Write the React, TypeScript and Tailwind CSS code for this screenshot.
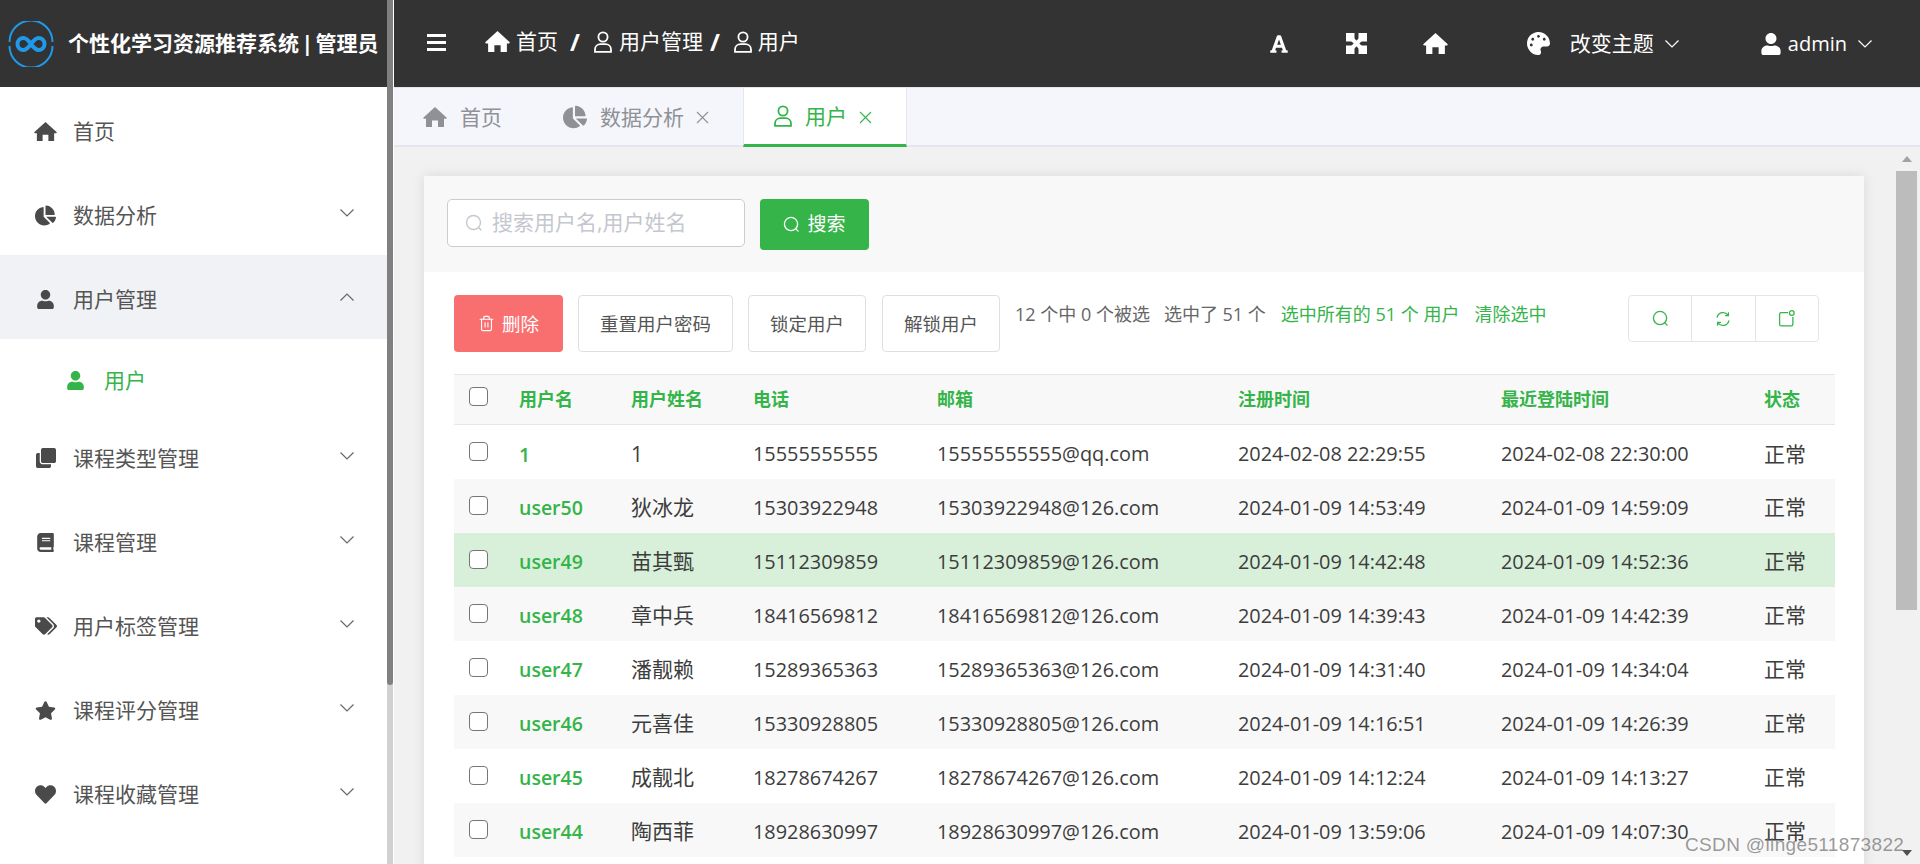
import React from "react";
import { FaChartPie, FaUser, FaClone, FaBook, FaTags, FaStar, FaHeart, FaFont, FaPalette } from "react-icons/fa";
import { Trash2 } from "lucide-react";

const Home = ({ size = 24, className = "" }: { size?: number; className?: string }) => (
  <svg width={size} height={size} viewBox="0 0 24 24" fill="currentColor" className={className}>
    <path d="M12 2 23.500 12.400a.8.8 0 0 1-.6 1.400H21V22h-6v-6.500H9V22H3v-8.200H1.100a.8.8 0 0 1-.6-1.400z" />
  </svg>
);

const Chevron = ({ up = false, className = "" }: { up?: boolean; className?: string }) => (
  <svg width="16" height="10" viewBox="0 0 16 10" fill="none" stroke="currentColor" strokeWidth="1.2" className={className}>
    {up ? <path d="M1.5 8.5 8 2l6.5 6.5" /> : <path d="M1.5 1.5 8 8l6.5-6.5" />}
  </svg>
);

const Search = ({ size = 18 }: { size?: number }) => (
  <svg width={size} height={size} viewBox="0 0 18 18" fill="none" stroke="currentColor" strokeWidth="1.4" strokeLinecap="round">
    <circle cx="8.5" cy="8.5" r="7" />
    <path d="M13.6 13.6 16 16" />
  </svg>
);

const Refresh = () => (
  <svg width="16" height="16" viewBox="0 0 16 16" fill="none" stroke="currentColor" strokeWidth="1.3" strokeLinecap="round">
    <path d="M2.2 6.2A6 6 0 0 1 13 4.2" />
    <path d="M13.8 9.8A6 6 0 0 1 3 11.8" />
    <path d="M13.4 1.8v2.8h-2.8" />
    <path d="M2.6 14.2v-2.8h2.8" />
  </svg>
);

const Note = () => (
  <svg width="17" height="17" viewBox="0 0 16 16" fill="none" stroke="currentColor" strokeWidth="1.2">
    <path d="M9.5 2.5H3a1.5 1.5 0 0 0-1.5 1.5v9.5A1.5 1.5 0 0 0 3 15h9.5a1.5 1.5 0 0 0 1.5-1.5V6.5" />
    <circle cx="13" cy="2.8" r="2.2" />
  </svg>
);

const UserOutline = ({ className = "" }: { className?: string }) => (
  <svg width="20" height="22" viewBox="0 0 20 22" fill="none" stroke="currentColor" strokeWidth="1.8" className={className}>
    <circle cx="10" cy="6" r="4.6" />
    <path d="M2 20.8v-2.3c0-3.2 2.6-5.3 5.5-5.3h5c2.9 0 5.5 2.1 5.5 5.3v2.3z" />
  </svg>
);

const Close = () => (
  <svg width="15" height="15" viewBox="0 0 15 15" fill="none" stroke="currentColor" strokeWidth="1.1">
    <path d="M2 2l11 11M13 2 2 13" />
  </svg>
);

const ArrowsSquare = () => (
  <svg width="21" height="21" viewBox="0 0 21 21" fill="#fff">
    <rect x="0" y="0" width="8.500" height="8.500" />
    <rect x="12.500" y="0" width="8.500" height="8.500" />
    <rect x="0" y="12.500" width="8.500" height="8.500" />
    <rect x="12.500" y="12.500" width="8.500" height="8.500" />
    <path d="M5 5 16 16M16 5 5 16" stroke="#fff" strokeWidth="4" />
  </svg>
);

const Logo = () => (
  <svg width="46" height="46" viewBox="0 0 46 46" fill="none" stroke="#1f9aea" className="shrink-0">
    <path d="M1.500 21A21.500 21.500 0 0 1 44.500 21" strokeWidth="2" />
    <path d="M44.500 25A21.500 21.500 0 0 1 1.500 25" strokeWidth="2" />
    <path d="M23 23c-2.500-3.500-4.500-6-7.500-6a6 6 0 0 0 0 12c3 0 5-2.500 7.500-6s4.500-6 7.500-6a6 6 0 0 1 0 12c-3 0-5-2.500-7.500-6z" strokeWidth="4" />
  </svg>
);

const menu = [
  { icon: <Home size={23} />, label: "首页", arrow: false },
  { icon: <FaChartPie size={21} />, label: "数据分析", arrow: true },
  { icon: <FaUser size={19} />, label: "用户管理", arrow: true, open: true },
  { icon: <FaClone size={20} />, label: "课程类型管理", arrow: true },
  { icon: <FaBook size={19} />, label: "课程管理", arrow: true },
  { icon: <FaTags size={22} />, label: "用户标签管理", arrow: true },
  { icon: <FaStar size={21} />, label: "课程评分管理", arrow: true },
  { icon: <FaHeart size={21} />, label: "课程收藏管理", arrow: true },
];

const rows = [
  ["1", "1", "15555555555", "15555555555@qq.com", "2024-02-08 22:29:55", "2024-02-08 22:30:00"],
  ["user50", "狄冰龙", "15303922948", "15303922948@126.com", "2024-01-09 14:53:49", "2024-01-09 14:59:09"],
  ["user49", "苗其甄", "15112309859", "15112309859@126.com", "2024-01-09 14:42:48", "2024-01-09 14:52:36"],
  ["user48", "章中兵", "18416569812", "18416569812@126.com", "2024-01-09 14:39:43", "2024-01-09 14:42:39"],
  ["user47", "潘靓赖", "15289365363", "15289365363@126.com", "2024-01-09 14:31:40", "2024-01-09 14:34:04"],
  ["user46", "元喜佳", "15330928805", "15330928805@126.com", "2024-01-09 14:16:51", "2024-01-09 14:26:39"],
  ["user45", "成靓北", "18278674267", "18278674267@126.com", "2024-01-09 14:12:24", "2024-01-09 14:13:27"],
  ["user44", "陶西菲", "18928630997", "18928630997@126.com", "2024-01-09 13:59:06", "2024-01-09 14:07:30"],
];

const heads = ["用户名", "用户姓名", "电话", "邮箱", "注册时间", "最近登陆时间", "状态"];
const widths = ["w-[112px]", "w-[122px]", "w-[184px]", "w-[301px]", "w-[263px]", "w-[263px]", "w-[71px]"];

const Check = ({ className = "" }: { className?: string }) => (
  <span className={`block w-[19px] h-[19px] rounded-[4px] border-[1.5px] border-[#767676] bg-white ${className}`} />
);

const MenuItem = ({ item }: { item: (typeof menu)[number] }) => (
  <div className={`h-[84px] flex items-center pt-[4px] pl-[34px] pr-[32px] text-[21px] text-[#555] ${item.open ? "bg-[#f0f2f6]" : ""}`}>
    <span className="w-[23px] flex justify-center text-[#4a4a4a]">{item.icon}</span>
    <span className="ml-[16px] flex-1 leading-none">{item.label}</span>
    {item.arrow && <Chevron up={item.open} className="-mt-[4px] text-[#666]" />}
  </div>
);

export default function App() {
  return (
    <div className="relative w-[1920px] h-[864px] overflow-hidden flex bg-white font-['Open_Sans','Noto_Sans_CJK_SC',sans-serif]">
      {/* sidebar */}
      <aside className="w-[394px] shrink-0 flex h-full">
        <div className="w-[387px] shrink-0 flex flex-col">
          <div className="h-[87px] bg-[#333] flex items-center pl-[8px]">
            <Logo />
            <span className="ml-[14px] text-white font-bold text-[21px] whitespace-nowrap [word-spacing:-3px]">个性化学习资源推荐系统 | 管理员</span>
          </div>
          <MenuItem item={menu[0]} />
          <MenuItem item={menu[1]} />
          <MenuItem item={menu[2]} />
          <div className="h-[75px] flex items-center pt-[8px] pl-[66px] text-[21px] text-[#35b44a]">
            <span className="w-[19px] flex justify-center"><FaUser size={19} /></span>
            <span className="ml-[19px] leading-none">用户</span>
          </div>
          {menu.slice(3).map((m) => (
            <MenuItem key={m.label} item={m} />
          ))}
        </div>
        <div className="w-[6px] bg-[#d1d1d1] flex flex-col">
          <div className="h-[685px] bg-[#808080] rounded-b-[3px]" />
        </div>
      </aside>

      {/* main */}
      <div className="flex-1 min-w-0 flex flex-col">
        <header className="h-[87px] bg-[#333] text-white flex items-center shrink-0">
          <div className="ml-[33px] w-[19px] flex flex-col gap-[4px] -mt-[2px]">
            <span className="h-[3px] bg-white" />
            <span className="h-[3px] bg-white" />
            <span className="h-[3px] bg-white" />
          </div>
          <div className="ml-[39px] flex items-center text-[21px] -mt-[4px]">
            <Home size={25} />
            <span className="ml-[6px]">首页</span>
            <span className="ml-[12px] font-bold text-[24px] leading-none">/</span>
            <UserOutline className="ml-[13px]" />
            <span className="ml-[6px]">用户管理</span>
            <span className="ml-[7px] font-bold text-[24px] leading-none">/</span>
            <UserOutline className="ml-[13px]" />
            <span className="ml-[5px]">用户</span>
          </div>
          <div className="ml-auto flex items-center">
            <FaFont size={20} />
            <span className="ml-[57px]"><ArrowsSquare /></span>
            <span className="ml-[56px]"><Home size={25} /></span>
            <span className="ml-[79px]"><FaPalette size={23} /></span>
            <span className="ml-[20px] text-[21px]">改变主题</span>
            <Chevron className="ml-[10px]" />
            <span className="ml-[80px]"><FaUser size={22} /></span>
            <span className="ml-[6px] text-[20px]">admin</span>
            <Chevron className="ml-[10px] mr-[47px]" />
          </div>
        </header>

        <nav className="h-[60px] bg-[#f4f6fb] border-t border-[#e4e7ed] border-b-2 flex text-[21px] text-[#8f9196] shrink-0">
          <div className="w-[139px] flex items-center pl-[29px]">
            <Home size={24} />
            <span className="ml-[13px] pt-[2px]">首页</span>
          </div>
          <div className="w-[210px] flex items-center pl-[30px]">
            <FaChartPie size={24} />
            <span className="ml-[13px] pt-[2px]">数据分析</span>
            <span className="ml-[11px] pt-[2px]"><Close /></span>
          </div>
          <div className="w-[164px] -mb-[2px] bg-white border-x border-[#e4e7ed] border-b-[3px] border-b-[#35b44a] flex items-center pl-[29px] text-[#35b44a]">
            <UserOutline />
            <span className="ml-[12px] pt-[2px]">用户</span>
            <span className="ml-[11px] pt-[2px]"><Close /></span>
          </div>
        </nav>

        <div className="flex-1 min-h-0 bg-[#f1f1f1] flex">
          <div className="flex-1 min-w-0 overflow-hidden pt-[29px] pl-[30px] pr-[32px]">
            <section className="bg-white shadow-[0_0_12px_rgba(0,0,0,0.1)] h-[800px]">
              <div className="h-[96px] bg-[#f8f8f8] pt-[23px] pl-[23px] flex items-start">
                <div className="w-[298px] h-[48px] bg-white border border-[#c9ccd3] rounded-[5px] flex items-center pl-[17px] text-[21px] text-[#c4c7ce]">
                  <Search />
                  <span className="ml-[9px]">搜索用户名,用户姓名</span>
                </div>
                <button className="ml-[15px] w-[109px] h-[51px] bg-[#35b44a] rounded-[4px] text-white text-[19px] flex items-center justify-center">
                  <Search size={17} />
                  <span className="ml-[7px]">搜索</span>
                </button>
              </div>

              <div className="pt-[23px] pl-[30px] pr-[45px] flex items-start text-[18px]">
                <button className="w-[109px] h-[57px] bg-[#f96e6f] rounded-[4px] text-white flex items-center justify-center">
                  <Trash2 size={17} strokeWidth={1.6} />
                  <span className="ml-[7px] text-[18.5px]">删除</span>
                </button>
                <button className="ml-[15px] w-[155px] h-[57px] bg-white border border-[#dcdfe6] rounded-[4px] text-[#555] text-[18.5px]">重置用户密码</button>
                <button className="ml-[15px] w-[118px] h-[57px] bg-white border border-[#dcdfe6] rounded-[4px] text-[#555] text-[18.5px]">锁定用户</button>
                <button className="ml-[16px] w-[118px] h-[57px] bg-white border border-[#dcdfe6] rounded-[4px] text-[#555] text-[18.5px]">解锁用户</button>
                <div className="ml-[15px] pt-[6px] text-[#666] whitespace-nowrap flex">
                  <span>12 个中 0 个被选</span>
                  <span className="ml-[14px]">选中了 51 个</span>
                  <span className="ml-[15px] text-[#35b44a]">选中所有的 51 个 用户</span>
                  <span className="ml-[15px] text-[#35b44a]">清除选中</span>
                </div>
                <div className="ml-auto w-[191px] h-[47px] border border-[#e2e5ea] rounded-[4px] flex text-[#35b44a] shrink-0">
                  <span className="flex-1 flex items-center justify-center border-r border-[#e2e5ea]"><Search size={17} /></span>
                  <span className="flex-1 flex items-center justify-center border-r border-[#e2e5ea]"><Refresh /></span>
                  <span className="flex-1 flex items-center justify-center"><Note /></span>
                </div>
              </div>

              <div className="mt-[22px] pl-[30px] pr-[29px]">
                <table className="w-[1381px] table-fixed border-collapse text-[19.9px] text-[#3d3d3d]">
                  <thead>
                    <tr className="h-[50px] bg-[#f8f8f8] border-y border-[#e5e7eb]">
                      <th className="w-[65px] pl-[15px] align-top pt-[12px]"><Check /></th>
                      {heads.map((h, i) => (
                        <th key={h} className={`${widths[i]} text-left text-[18px] font-bold text-[#35b44a]`}>{h}</th>
                      ))}
                    </tr>
                  </thead>
                  <tbody>
                    {rows.map((r, i) => (
                      <tr key={r[0]} className={`h-[54px] ${i === 2 ? "bg-[#d8f0da]" : i === 1 || i === 3 || i === 5 || i === 7 ? "bg-[#f8f8f8]" : "bg-white"}`}>
                        <td className="pl-[15px] align-top pt-[17px]"><Check /></td>
                        <td className="pt-[5px] text-[19.5px] font-semibold text-[#35b44a]">{r[0]}</td>
                        <td className="pt-[5px] text-[21px]">{r[1]}</td>
                        <td className="pt-[5px]">{r[2]}</td>
                        <td className="pt-[5px]">{r[3]}</td>
                        <td className="pt-[5px]">{r[4]}</td>
                        <td className="pt-[5px]">{r[5]}</td>
                        <td className="pt-[5px] text-[21px]">正常</td>
                      </tr>
                    ))}
                  </tbody>
                </table>
              </div>
            </section>
          </div>

          <div className="w-[24px] shrink-0 pr-[3px] flex flex-col">
            <div className="h-[24px] flex items-center justify-center">
              <span className="w-0 h-0 border-x-[5px] border-x-transparent border-b-[6px] border-b-[#a3a3a3]" />
            </div>
            <div className="h-[439px] bg-[#bcbcbc]" />
            <div className="flex-1 flex items-end justify-center pb-[8px]">
              <span className="w-0 h-0 border-x-[5px] border-x-transparent border-t-[6px] border-t-[#505050]" />
            </div>
          </div>
        </div>
      </div>

      <span className="absolute left-[1685px] top-[833px] text-[19px] leading-[24px] text-[rgba(120,120,120,0.75)] font-['Liberation_Sans',sans-serif] tracking-[0.35px] whitespace-nowrap">CSDN @linge511873822</span>
    </div>
  );
}
